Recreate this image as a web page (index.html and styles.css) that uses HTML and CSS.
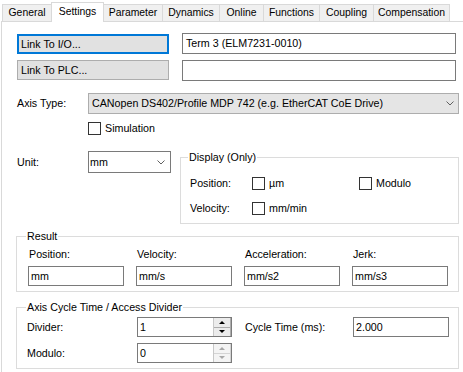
FILE: index.html
```html
<!DOCTYPE html>
<html>
<head>
<meta charset="utf-8">
<link rel="stylesheet" href="styles.css">
</head>
<body>
<div class="tabs">
  <div class="tab w-general">General</div>
  <div class="tab sel w-settings">Settings</div>
  <div class="tab w-parameter">Parameter</div>
  <div class="tab w-dynamics">Dynamics</div>
  <div class="tab w-online">Online</div>
  <div class="tab w-functions">Functions</div>
  <div class="tab w-coupling">Coupling</div>
  <div class="tab w-comp">Compensation</div>
</div>
<div class="panel">
  <div class="row r1">
    <div class="btn focus">Link To I/O...</div>
    <div class="tb wide">Term 3 (ELM7231-0010)</div>
  </div>
  <div class="row r2">
    <div class="btn">Link To PLC...</div>
    <div class="tb wide"></div>
  </div>
  <div class="row r3">
    <div class="lbl">Axis Type:</div>
    <div class="combo gray">
      <span>CANopen DS402/Profile MDP 742 (e.g. EtherCAT CoE Drive)</span>
      <svg class="chev" width="8" height="5" viewBox="0 0 8 5"><polyline points="0.5,0.5 4,4 7.5,0.5" fill="none" stroke="#606060" stroke-width="1"/></svg>
    </div>
  </div>
  <div class="row r4">
    <label class="chk"><span class="box"></span>Simulation</label>
  </div>
  <div class="row r5">
    <div class="lbl unit-lbl">Unit:</div>
    <div class="combo unit">
      <span>mm</span>
      <svg class="chev" width="8" height="5" viewBox="0 0 8 5"><polyline points="0.5,0.5 4,4 7.5,0.5" fill="none" stroke="#606060" stroke-width="1"/></svg>
    </div>
    <div class="group display">
      <div class="gtitle">Display (Only)</div>
      <div class="drow d1">
        <div class="dlbl">Position:</div>
        <label class="chk dcell"><span class="box"></span>µm</label>
        <label class="chk"><span class="box"></span>Modulo</label>
      </div>
      <div class="drow d2">
        <div class="dlbl">Velocity:</div>
        <label class="chk dcell"><span class="box"></span>mm/min</label>
      </div>
    </div>
  </div>
  <div class="group result">
    <div class="gtitle">Result</div>
    <div class="rgrid">
      <div class="rl">Position:</div>
      <div class="rl">Velocity:</div>
      <div class="rl">Acceleration:</div>
      <div class="rl">Jerk:</div>
      <div class="tb sm">mm</div>
      <div class="tb sm">mm/s</div>
      <div class="tb sm">mm/s2</div>
      <div class="tb sm">mm/s3</div>
    </div>
  </div>
  <div class="group cycle">
    <div class="gtitle">Axis Cycle Time / Access Divider</div>
    <div class="cgrid">
      <div class="cl">Divider:</div>
      <div class="spin">
        <span class="sv">1</span>
        <div class="sbtns"><div class="sb up"></div><div class="sb dn"></div></div>
      </div>
      <div class="cl cl2">Cycle Time (ms):</div>
      <div class="tb sm">2.000</div>
      <div class="cl">Modulo:</div>
      <div class="spin dis">
        <span class="sv">0</span>
        <div class="sbtns"><div class="sb up"></div><div class="sb dn"></div></div>
      </div>
    </div>
  </div>
</div>
</body>
</html>
```
FILE: styles.css
```css
html, body {
  margin: 0;
  padding: 0;
  background: #ffffff;
  overflow: hidden;
}
body {
  font-family: "Liberation Sans", Arial, sans-serif;
  font-size: 10.7px;
  line-height: 13px;
  color: #000;
  width: 463px;
  height: 372px;
}
.tabs {
  display: flex;
  align-items: flex-end;
  height: 21px;
  padding-left: 2px;
  position: relative;
  z-index: 1;
}
.tab {
  box-sizing: border-box;
  height: 17px;
  border: 1px solid #d9d9d9;
  border-bottom: none;
  background: #f0f0f0;
  margin-right: -1px;
  text-align: center;
  line-height: 16px;
  font-size: 10.4px;
  white-space: nowrap;
}
.tab.sel {
  height: 20px;
  background: #fff;
  margin-bottom: -1px;
  line-height: 17px;
  position: relative;
  z-index: 2;
}
.w-general { width: 50px; }
.w-settings { width: 53px; }
.w-parameter { width: 60px; }
.w-dynamics { width: 58px; }
.w-online { width: 45px; }
.w-functions { width: 57px; }
.w-coupling { width: 55px; }
.w-comp { width: 77px; }

.panel {
  margin-left: 1px;
  border-top: 1px solid #d9d9d9;
  border-left: 1px solid #d9d9d9;
  height: 339px;
  padding: 11px 0 0 15px;
  background: #fff;
  overflow: hidden;
}
.row { display: flex; }
.r1 { height: 21px; gap: 13px; align-items: flex-start; }
.r1 .btn { margin-top: 1px; }
.r2 { margin-top: 6px; height: 21px; gap: 13px; align-items: flex-start; }
.r3 { margin-top: 12px; height: 21px; align-items: center; }
.r4 { margin-top: 7px; padding-left: 71px; height: 14px; }
.r5 { margin-top: 16px; align-items: flex-start; }

.btn {
  box-sizing: border-box;
  width: 152px;
  height: 20px;
  background: #e1e1e1;
  border: 1px solid #adadad;
  padding-left: 3px;
  line-height: 18px;
}
.btn.focus {
  border: 2px solid #0078d7;
  padding-left: 2px;
  line-height: 16px;
}
.tb {
  box-sizing: border-box;
  background: #fff;
  border: 1px solid #7a7a7a;
  white-space: nowrap;
}
.tb.wide {
  width: 274px;
  height: 21px;
  padding-left: 3px;
  line-height: 19px;
}
.tb.sm {
  width: 96px;
  height: 20px;
  padding-left: 2px;
  line-height: 18px;
}
.lbl { width: 71px; }
.unit-lbl { margin-top: 5px; }
.combo {
  box-sizing: border-box;
  display: flex;
  align-items: center;
  justify-content: space-between;
  border: 1px solid #adadad;
  white-space: nowrap;
}
.combo.gray {
  width: 371px;
  height: 21px;
  background: #e5e5e5;
  padding: 0 4px 0 3px;
}
.combo.unit {
  width: 83px;
  height: 22px;
  background: #fff;
  border-color: #7a7a7a;
  padding: 0 5px 0 1px;
}
.chev { display: block; }

.chk {
  display: flex;
  align-items: center;
  height: 14px;
}
.box {
  box-sizing: border-box;
  width: 13px;
  height: 13px;
  border: 1px solid #333;
  background: #fff;
  margin-right: 4px;
}

.group {
  box-sizing: border-box;
  border: 1px solid #dcdcdc;
}
.gtitle {
  width: fit-content;
  background: #fff;
  padding: 0 1px;
  height: 13px;
}
.display {
  margin: 6px 0 0 9px;
  width: 279px;
  height: 67px;
  padding-left: 9px;
}
.display .gtitle { margin: -7px 0 0 -2px; }
.drow { display: flex; align-items: center; height: 14px; }
.d1 { margin-top: 12px; }
.d2 { margin-top: 11px; }
.dlbl { width: 62px; }
.dcell { width: 107px; }

.result {
  margin: 12px 0 0 -1px;
  width: 443px;
  height: 56px;
  padding-left: 11px;
}
.result .gtitle { margin: -7px 0 0 -2px; }
.rgrid {
  display: grid;
  grid-template-columns: repeat(4, 96px);
  column-gap: 12px;
  margin-top: 5px;
}
.rl { height: 13px; margin-bottom: 5px; padding-left: 1px; }

.cycle {
  margin: 15px 0 0 -1px;
  width: 443px;
  height: 62px;
  padding-left: 10px;
}
.cycle .gtitle { margin: -7px 0 0 -1px; }
.cgrid {
  display: grid;
  grid-template-columns: 110px 95px 121px 96px;
  grid-template-rows: 20px 20px;
  row-gap: 6px;
  margin-top: 3px;
  align-items: center;
}
.cl2 { padding-left: 13px; }
.spin {
  box-sizing: border-box;
  height: 20px;
  border: 1px solid #7a7a7a;
  display: flex;
  justify-content: space-between;
  background: #fff;
}
.spin .sv { padding-left: 2px; line-height: 18px; }
.sbtns {
  width: 17px;
  display: flex;
  flex-direction: column;
  border-left: 1px solid #c8c8c8;
}
.sb {
  flex: 1;
  background: #ececec;
  border: 1px solid #adadad;
  border-left: none;
  display: flex;
  align-items: center;
  justify-content: center;
}
.sb.up { border-top: none; }
.sb.dn { border-top: none; border-bottom: none; }
.sb.up::after {
  content: "";
  border-left: 3px solid transparent;
  border-right: 3px solid transparent;
  border-bottom: 3px solid #000;
}
.sb.dn::after {
  content: "";
  border-left: 3px solid transparent;
  border-right: 3px solid transparent;
  border-top: 3px solid #000;
}
.spin.dis .sb { background: #f4f4f4; border-color: #d4d4d4; }
.spin.dis .sb.up::after { border-bottom-color: #a8a8a8; }
.spin.dis .sb.dn::after { border-top-color: #a8a8a8; }
```
